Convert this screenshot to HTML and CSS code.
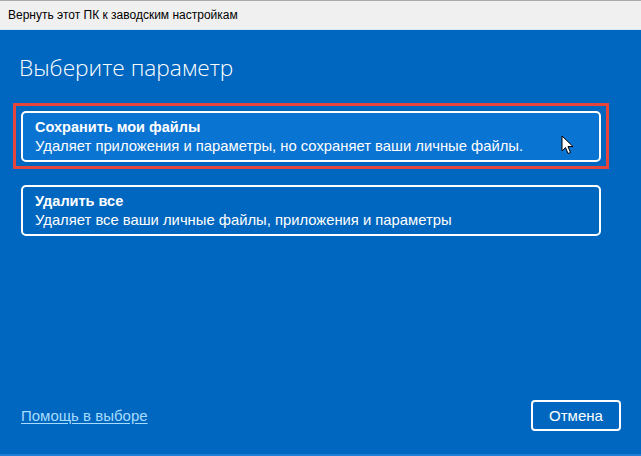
FILE: index.html
```html
<!DOCTYPE html>
<html lang="ru">
<head>
<meta charset="utf-8">
<link rel="stylesheet" href="styles.css">
</head>
<body>
<div class="window">
  <div class="titlebar">Вернуть этот ПК к заводским настройкам</div>
  <div class="content">
    <h1 class="heading">Выберите параметр</h1>
    <div class="options">
      <div class="highlight">
        <div class="option option-hover">
          <div class="option-title">Сохранить мои файлы</div>
          <div class="option-desc">Удаляет приложения и параметры, но сохраняет ваши личные файлы.</div>
          <svg class="cursor" width="14" height="21" viewBox="0 0 14 21"><path d="M1 1 L1 16 L4.5 12.5 L7 18.5 L9.5 17.5 L7 11.5 L12 11.5 Z" fill="#fff" stroke="#000" stroke-width="1" stroke-linejoin="miter"/></svg>
        </div>
      </div>
      <div class="option option-plain">
        <div class="option-title">Удалить все</div>
        <div class="option-desc">Удаляет все ваши личные файлы, приложения и параметры</div>
      </div>
    </div>
    <div class="footer">
      <a class="help" href="#">Помощь в выборе</a>
      <button class="cancel">Отмена</button>
    </div>
  </div>
</div>
</body>
</html>
```

FILE: styles.css
```css
html, body {
  margin: 0;
  padding: 0;
}
body {
  width: 641px;
  height: 456px;
  overflow: hidden;
  background: #0067c0;
  font-family: "Liberation Sans", "Noto Sans", sans-serif;
}
.window {
  display: flex;
  flex-direction: column;
  height: 456px;
}
.titlebar {
  height: 30px;
  box-sizing: border-box;
  border-top: 1px solid #a9a9a9;
  background: #f0f0f0;
  color: #000;
  font-size: 12px;
  line-height: 29px;
  padding-left: 8px;
  border-bottom: 1px solid #cfe9f5;
}
.content {
  flex: 1;
  display: flex;
  flex-direction: column;
  background: #0067c0;
  border-bottom: 2px solid #1e7fd6;
  padding: 0 21px 0 21px;
}
.heading {
  margin: 23px 0 0 -2px;
  font-family: "Open Sans", "Noto Sans", sans-serif;
  font-weight: 300;
  font-size: 22.7px;
  line-height: 30px;
  color: #fff;
}
.options {
  margin-top: 20px;
  width: 580px;
  display: flex;
  flex-direction: column;
  gap: 16px;
}
.highlight {
  margin: 0 -8px;
  border: 3px solid #e5453b;
  padding: 5px 5px 4px 5px;
}
.option {
  position: relative;
  box-sizing: border-box;
  height: 51px;
  border: 2px solid #fff;
  border-radius: 5px;
  padding: 6px 12px 0 12px;
  color: #fff;
}
.option-hover {
  background: #0a74d2;
}
.option-title {
  font-weight: bold;
  font-size: 14.5px;
  line-height: 17px;
}
.option-desc {
  font-size: 14.8px;
  line-height: 20px;
}
.cursor {
  position: absolute;
  left: 538px;
  top: 22px;
}
.footer {
  margin-top: auto;
  display: flex;
  justify-content: space-between;
  align-items: center;
  padding-bottom: 23px;
}
.help {
  color: #a6dcff;
  font-size: 15px;
  text-decoration: underline;
  text-underline-offset: 2px;
}
.cancel {
  margin-right: -1px;
  width: 90px;
  height: 31px;
  background: transparent;
  border: 2px solid #fff;
  border-radius: 4px;
  color: #fff;
  font-family: "Liberation Sans", "Noto Sans", sans-serif;
  font-size: 15px;
  padding: 0;
}
```
